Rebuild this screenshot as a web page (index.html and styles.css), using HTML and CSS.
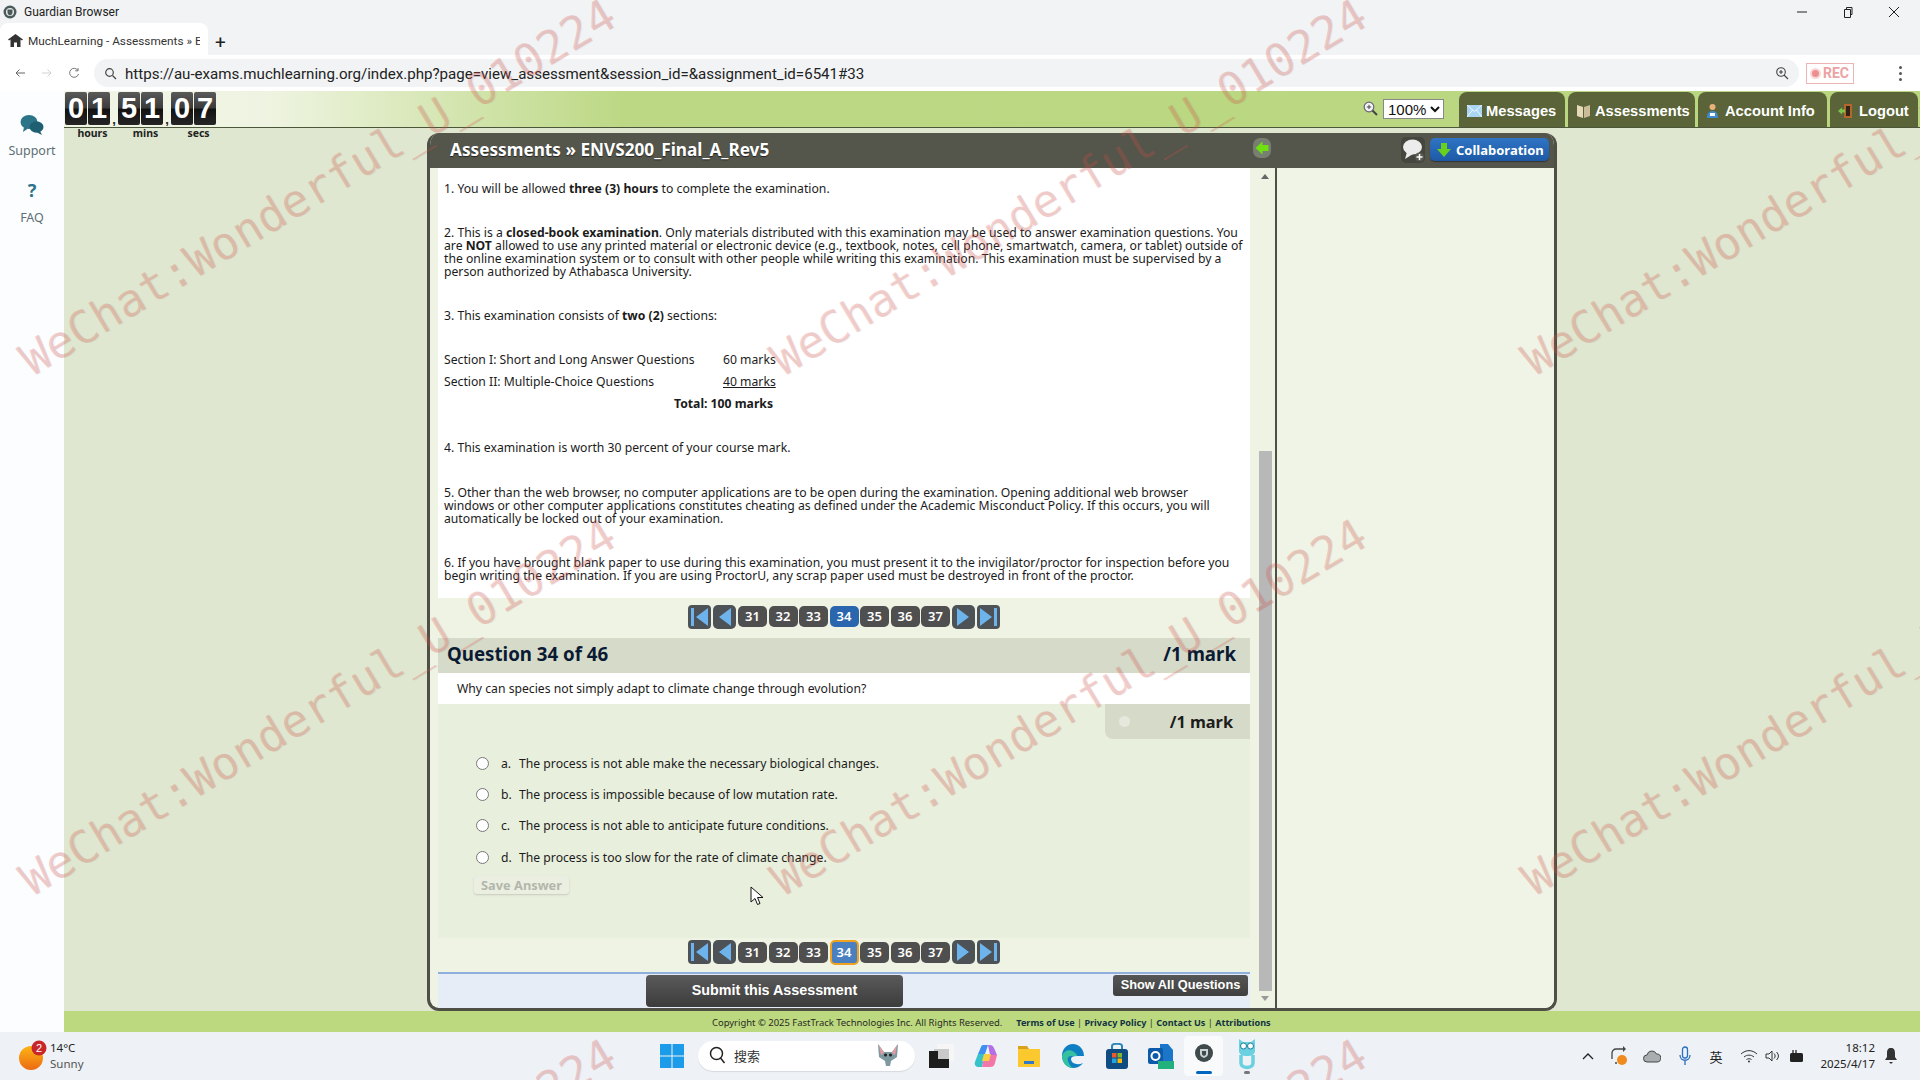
FILE: index.html
```html
<!DOCTYPE html>
<html>
	<head>
		<meta charset="utf-8">
		<title>MuchLearning - Assessments</title>
		<link rel="stylesheet" href="styles.css">
	</head>
	<body>
		<div class="titlebar">
			<svg class="ico-guard" width="14" height="14" viewBox="0 0 14 14"><circle cx="7" cy="7" r="6.5" fill="#4c5a5c"/><circle cx="7" cy="7" r="4" fill="#e8ecec"/><path d="M4.5 4.5h5v3c0 1.500-1.200 2.500-2.500 3-1.300-.5-2.500-1.500-2.500-3z" fill="#4c5a5c"/></svg>
			<span class="app-name">Guardian Browser</span>
			<div class="winbtns">
				<svg width="12" height="12" viewBox="0 0 12 12"><path d="M1 6h10" stroke="#222" fill="none"/></svg>
				<svg width="12" height="12" viewBox="0 0 12 12"><path d="M2.500 3.500h6v8h-6zM4.500 3.500V1.500h5.500v7H8.500" stroke="#222" fill="none"/></svg>
				<svg width="12" height="12" viewBox="0 0 12 12"><path d="M1 1l10 10M11 1L1 11" stroke="#222" fill="none"/></svg>
			</div>
		</div>
		<div class="tabstrip">
			<div class="tab">
				<svg width="15" height="15" viewBox="0 0 15 15"><path d="M7.500 1L0 6.500l1 1 1.500-1V14h3.500V9.500h3V14h3.500V6.500l1.500 1 1-1z" fill="#333"/></svg>
				<span class="tab-text">MuchLearning - Assessments » E</span>
			</div>
			<span class="newtab">+</span>
		</div>
		<div class="toolbar">
			<svg class="nav-ico" width="14" height="14" viewBox="0 0 14 14"><path d="M12 7H3M6.500 3.500L3 7l3.500 3.500" stroke="#666" fill="none"/></svg>
			<svg class="nav-ico" width="14" height="14" viewBox="0 0 14 14"><path d="M2 7h9M7.500 3.500L11 7l-3.500 3.500" stroke="#cfd2d4" fill="none"/></svg>
			<svg class="nav-ico" width="14" height="14" viewBox="0 0 14 14"><path d="M11 4.500A4.500 4.500 0 1 0 11.500 8M11 2v2.800H8.200" stroke="#777" fill="none"/></svg>
			<div class="urlbar">
				<svg width="13" height="13" viewBox="0 0 13 13"><circle cx="5.500" cy="5.500" r="3.800" stroke="#444" stroke-width="1.200" fill="none"/><path d="M8.500 8.500L12 12" stroke="#444" stroke-width="1.200"/></svg>
				<span class="url">https://au-exams.muchlearning.org/index.php?page=view_assessment&amp;session_id=&amp;assignment_id=6541#33</span>
				<svg class="url-zoom" width="14" height="14" viewBox="0 0 14 14"><circle cx="6" cy="6" r="4.300" stroke="#444" stroke-width="1.100" fill="none"/><path d="M9 9l4 4M4 6h4M6 4v4" stroke="#444" stroke-width="1.100"/></svg>
			</div>
			<div class="rec"><i class="rec-dot"></i>REC</div>
			<div class="dots"><i></i><i></i><i></i></div>
		</div>

		<div class="page">
			<div class="sidebar">
				<svg width="24" height="22" viewBox="0 0 24 22"><ellipse cx="9" cy="8" rx="8.500" ry="7" fill="#2c7488"/><path d="M4 13l-1 5 5-3.500z" fill="#2c7488"/><ellipse cx="16.500" cy="13" rx="7" ry="5.800" fill="#1f5f72"/><path d="M20 17l2 4-5-2.500z" fill="#1f5f72"/></svg>
				<span class="side-label">Support</span>
				<span class="side-q">?</span>
				<span class="side-label">FAQ</span>
			</div>
			<div class="main">
				<div class="header">
					<div class="timer">
						<div class="timer-group">
							<div class="digits"><b>0</b><b>1</b></div>
							<span>hours</span>
						</div>
						<i class="comma">,</i>
						<div class="timer-group">
							<div class="digits"><b>5</b><b>1</b></div>
							<span>mins</span>
						</div>
						<i class="comma">,</i>
						<div class="timer-group">
							<div class="digits"><b>0</b><b>7</b></div>
							<span>secs</span>
						</div>
					</div>
					<svg class="mag" width="15" height="15" viewBox="0 0 15 15"><circle cx="6" cy="6" r="4.800" fill="#f4f4f4" stroke="#667" stroke-width="1.200"/><path d="M9.500 9.500L14 14" stroke="#444" stroke-width="2"/><path d="M3.800 6h4.400M6 3.800v4.400" stroke="#445"/></svg>
					<select class="zoomsel"><option>100%</option></select>
					<div class="navtabs">
						<a class="navtab t-msg">
							<svg width="15" height="12" viewBox="0 0 15 12"><rect width="15" height="12" fill="#a9d4f2"/><path d="M0 0l7.500 6.500L15 0M0 12l5.500-7M15 12L9.500 5" stroke="#eef7fd" fill="none"/></svg>
							Messages</a>
						<a class="navtab t-ass">
							<svg width="15" height="14" viewBox="0 0 15 14"><path d="M1 1l6 2v11l-6-2z" fill="#e6d9ba"/><path d="M14 1L8 3v11l6-2z" fill="#c9bc98"/></svg>
							Assessments</a>
						<a class="navtab t-acc">
							<svg width="13" height="16" viewBox="0 0 13 16"><circle cx="6.500" cy="4" r="3" fill="#e9b27c"/><path d="M1 15c0-5 2-7 5.500-7s5.500 2 5.500 7z" fill="#3f8ccc"/><rect x="4" y="10" width="5" height="3" fill="#fff"/></svg>
							Account Info</a>
						<a class="navtab t-out">
							<svg width="15" height="16" viewBox="0 0 15 16"><rect x="6" y="1" width="8" height="14" fill="#b5662d"/><rect x="8" y="3" width="4" height="10" fill="#2f2418"/><path d="M0 8l4-3.500v2h3v3H4v2z" fill="#7cc44a"/></svg>
							Logout</a>
					</div>
				</div>

				<div class="content">
					<div class="panel">
						<div class="panel-head">
							<h1>Assessments » ENVS200_Final_A_Rev5</h1>
							<svg class="back-ico" width="18" height="20" viewBox="0 0 18 20"><rect width="18" height="20" rx="7" fill="#777f70"/><path d="M2.500 10l7-6.500V7h6v6h-6v3.500z" fill="#6fe010"/></svg>
							<svg class="bubble-ico" width="24" height="26" viewBox="0 0 24 26"><rect width="24" height="26" rx="5" fill="#45463d"/><ellipse cx="11.500" cy="10" rx="9.500" ry="7.500" fill="#ececec"/><path d="M6 15l-2 7 8-5z" fill="#ececec"/><circle cx="18.500" cy="20" r="4.500" fill="#5a5b52"/><path d="M18.500 17v6M15.500 20h6" stroke="#fff" stroke-width="1.500"/></svg>
							<a class="collab">
								<svg width="16" height="16" viewBox="0 0 16 16"><path d="M5 1h6v6h4l-7 8-7-8h4z" fill="#6ad01e"/></svg>
								Collaboration</a>
						</div>
						<div class="panel-body">
							<div class="qcol">
								<div class="notice">
									<p>1. You will be allowed <b>three (3) hours</b> to complete the examination.</p>
									<p>2. This is a <b>closed-book examination</b>. Only materials distributed with this examination may be used to answer examination questions. You<br>are <b>NOT</b> allowed to use any printed material or electronic device (e.g., textbook, notes, cell phone, smartwatch, camera, or tablet) outside of<br>the online examination system or to consult with other people while writing this examination. This examination must be supervised by a<br>person authorized by Athabasca University.</p>
									<p class="before-table">3. This examination consists of <b>two (2)</b> sections:</p>
									<div class="marks">
										<span>Section I: Short and Long Answer Questions</span><span>60 marks</span>
										<span>Section II: Multiple-Choice Questions</span><span class="under">40 marks</span>
										<b class="total">Total: 100 marks</b>
									</div>
									<p class="before-five">4. This examination is worth 30 percent of your course mark.</p>
									<p>5. Other than the web browser, no computer applications are to be open during the examination. Opening additional web browser<br>windows or other computer applications constitutes cheating as defined under the Academic Misconduct Policy. If this occurs, you will<br>automatically be locked out of your examination.</p>
									<p class="last">6. If you have brought blank paper to use during this examination, you must present it to the invigilator/proctor for inspection before you<br>begin writing the examination. If you are using ProctorU, any scrap paper used must be destroyed in front of the proctor.</p>
								</div>

								<div class="pager pager-top">
									<svg class="arrow" width="23" height="24" viewBox="0 0 23 24"><rect width="23" height="24" rx="4" fill="#4d5257"/><path d="M3 3h3v18H3zM20 3v18L8 12z" fill="#6db4ec"/></svg>
									<svg class="arrow" width="23" height="24" viewBox="0 0 23 24"><rect width="23" height="24" rx="5" fill="#4d5257"/><path d="M18 3v18L6 12z" fill="#6db4ec"/></svg>
									<span class="num">31</span><span class="num">32</span><span class="num">33</span><span class="num cur">34</span><span class="num">35</span><span class="num">36</span><span class="num">37</span>
									<svg class="arrow" width="23" height="24" viewBox="0 0 23 24"><rect width="23" height="24" rx="5" fill="#4d5257"/><path d="M5 3v18l12-9z" fill="#6db4ec"/></svg>
									<svg class="arrow" width="23" height="24" viewBox="0 0 23 24"><rect width="23" height="24" rx="4" fill="#4d5257"/><path d="M3 3v18l12-9zM17 3h3v18h-3z" fill="#6db4ec"/></svg>
								</div>

								<div class="q-head">
									<span>Question 34 of 46</span>
									<span>/1 mark</span>
								</div>
								<div class="q-text">Why can species not simply adapt to climate change through evolution?</div>
								<div class="answers">
									<div class="mark-tab">
										<i class="mark-dot"></i>
										<span>/1 mark</span>
									</div>
									<label class="opt"><input type="radio" name="a"><em>a.</em>The process is not able make the necessary biological changes.</label>
									<label class="opt"><input type="radio" name="a"><em>b.</em>The process is impossible because of low mutation rate.</label>
									<label class="opt"><input type="radio" name="a"><em>c.</em>The process is not able to anticipate future conditions.</label>
									<label class="opt"><input type="radio" name="a"><em>d.</em>The process is too slow for the rate of climate change.</label>
									<button class="save">Save Answer</button>
								</div>

								<div class="pager pager-bottom">
									<svg class="arrow" width="23" height="24" viewBox="0 0 23 24"><rect width="23" height="24" rx="4" fill="#4d5257"/><path d="M3 3h3v18H3zM20 3v18L8 12z" fill="#6db4ec"/></svg>
									<svg class="arrow" width="23" height="24" viewBox="0 0 23 24"><rect width="23" height="24" rx="5" fill="#4d5257"/><path d="M18 3v18L6 12z" fill="#6db4ec"/></svg>
									<span class="num">31</span><span class="num">32</span><span class="num">33</span><span class="num cur focus">34</span><span class="num">35</span><span class="num">36</span><span class="num">37</span>
									<svg class="arrow" width="23" height="24" viewBox="0 0 23 24"><rect width="23" height="24" rx="5" fill="#4d5257"/><path d="M5 3v18l12-9z" fill="#6db4ec"/></svg>
									<svg class="arrow" width="23" height="24" viewBox="0 0 23 24"><rect width="23" height="24" rx="4" fill="#4d5257"/><path d="M3 3v18l12-9zM17 3h3v18h-3z" fill="#6db4ec"/></svg>
								</div>

								<div class="submit-bar">
									<a class="submit">Submit this Assessment</a>
									<a class="showall">Show All Questions</a>
								</div>
							</div>
							<div class="scrollbar">
								<i class="sb-up"></i>
								<i class="sb-thumb"></i>
								<i class="sb-down"></i>
							</div>
							<div class="rightcol"></div>
						</div>
					</div>
				</div>

				<div class="footer">
					<span class="copy">Copyright © 2025 FastTrack Technologies Inc. All Rights Reserved.</span>
					<span class="links"><b>Terms of Use</b> | <b>Privacy Policy</b> | <b>Contact Us</b> | <b>Attributions</b></span>
				</div>
			</div>
		</div>

		<div class="taskbar">
			<div class="weather">
				<svg width="30" height="32" viewBox="0 0 30 32"><defs><linearGradient id="sun" x1="0" y1="0" x2="0" y2="1"><stop offset="0" stop-color="#fdb515"/><stop offset="1" stop-color="#ec6a12"/></linearGradient></defs><circle cx="12" cy="18" r="12" fill="url(#sun)"/><circle cx="20" cy="8" r="7.500" fill="#c8262a"/><text x="20" y="12" font-size="11" font-family="Liberation Sans" fill="#fff" text-anchor="middle">2</text></svg>
				<div class="w-text"><span>14°C</span><span class="w-sub">Sunny</span></div>
			</div>
			<div class="task-center">
				<svg class="winlogo" width="24" height="24" viewBox="0 0 24 24"><path d="M0 0h11.500v11.500H0zM12.500 0H24v11.500H12.500zM0 12.500h11.500V24H0zM12.500 12.500H24V24H12.500z" fill="#1c9ce8"/></svg>
				<div class="search">
					<svg width="18" height="18" viewBox="0 0 18 18"><circle cx="7.500" cy="7.500" r="6" stroke="#222" stroke-width="1.500" fill="none"/><path d="M11.500 12l4 5" stroke="#222" stroke-width="1.500"/></svg>
					<span>搜索</span>
					<svg class="bat" width="22" height="24" viewBox="0 0 22 24"><path d="M1 1l6 8h8l6-8-1 13-6 4-1 5h-4l-1-5-6-4z" fill="#7e9aa0"/><path d="M2 2l5 8-3 2zM20 2l-5 8 3 2z" fill="#e79aa3"/><circle cx="8.500" cy="12" r="1.500" fill="#222"/><circle cx="13.500" cy="12" r="1.500" fill="#222"/></svg>
				</div>
				<svg width="25" height="24" viewBox="0 0 25 24"><rect x="8" y="0" width="17" height="17" fill="#f6f6f6"/><rect x="5" y="5" width="15" height="12" fill="#c9c9c9"/><path d="M0 7h9v8h11v9H0z" fill="#1d1d1d"/></svg>
				<svg width="24" height="24" viewBox="0 0 24 24"><path d="M9 1h5l-3 9H4L7 3c.4-1.300 1-2 2-2z" fill="#3f8ff0"/><path d="M14 1h2c2 0 3 1 4 3l3 7h-7z" fill="#b46ee8"/><path d="M4 10h7l-3 13H5C2 23 0 21 1 18z" fill="#37c1c8"/><path d="M16 11h7l-2 8c-1 3-2 4-5 4H8l3-13z" fill="#f277a8"/><path d="M10 10h7l-2 7H8z" fill="#f8d040"/></svg>
				<svg width="24" height="24" viewBox="0 0 24 24"><path d="M1 2h9l2 3H1z" fill="#d9a21c"/><rect x="1" y="5" width="22" height="18" fill="#fbc92e"/><rect x="7" y="17" width="10" height="3" fill="#2f79c7"/></svg>
				<svg width="24" height="26" viewBox="0 0 24 26"><path d="M12 1C5 1 1 7 1 13s5 12 11 12c4 0 8-2 10-5-6 3-12 0-12-4 0-2 2-3 6-3h7C23 6 18 1 12 1z" fill="#0f7fc4"/><path d="M1 13C3 7 9 6 13 9c2 1 3 3 3 4h-6c-3 0-4 3-3 5 1 3 3 6 5 7C6 25 1 20 1 13z" fill="#35c1a0"/></svg>
				<svg width="24" height="26" viewBox="0 0 24 26"><path d="M7 6V3c0-3 10-3 10 0v3" stroke="#2a86b8" stroke-width="2" fill="none"/><rect x="1" y="6" width="22" height="20" rx="3" fill="#0f4c82"/><path d="M7 10h4.500v4.500H7z" fill="#ef5a2c"/><path d="M12.500 10H17v4.500h-4.500z" fill="#7fba2a"/><path d="M7 15.500h4.500V20H7z" fill="#1fa6e8"/><path d="M12.500 15.500H17V20h-4.500z" fill="#fdb900"/></svg>
				<svg width="26" height="26" viewBox="0 0 26 26"><path d="M12 1h8l5 6v12H12z" fill="#1b76c9"/><rect x="0" y="5" width="15" height="16" rx="2" fill="#0d5aa8"/><circle cx="7.500" cy="13" r="4" fill="none" stroke="#fff" stroke-width="2"/><rect x="10" y="18" width="16" height="8" fill="#22b07d"/></svg>
				<div class="task-active">
					<svg width="18" height="18" viewBox="0 0 18 18"><circle cx="9" cy="9" r="9" fill="#3f4a4c"/><path d="M5 5h8v5c0 2-2 3-4 4-2-1-4-2-4-4z" fill="#c9d2d2"/><path d="M7 7h4v3c0 1-1 1.500-2 2-1-.5-2-1-2-2z" fill="#3f4a4c"/></svg>
					<i class="active-bar"></i>
				</div>
				<svg class="owl" width="20" height="36" viewBox="0 0 20 36"><path d="M2 1l4 3h8l4-3v12c0 3-3 5-8 5s-8-2-8-5z" fill="#6bd0e0"/><circle cx="6.500" cy="8" r="3" fill="#fff" stroke="#1e7f9a"/><circle cx="13.500" cy="8" r="3" fill="#fff" stroke="#1e7f9a"/><path d="M4 17v8c0 6 12 6 12 0v-8" stroke="#6bd0e0" stroke-width="3.500" fill="none"/><rect x="7" y="33" width="6" height="3" rx="1.500" fill="#777"/></svg>
			</div>
			<div class="tray">
				<svg class="t-chev" width="12" height="8" viewBox="0 0 12 8"><path d="M1 7l5-5 5 5" stroke="#222" stroke-width="1.300" fill="none"/></svg>
				<svg class="t-sync" width="18" height="20" viewBox="0 0 18 20"><path d="M13 3H6a4 4 0 0 0-4 4v6M5 17h2" stroke="#444" stroke-width="1.300" fill="none"/><path d="M13 0v6l3-3z" fill="#444"/><circle cx="12" cy="14" r="5" fill="#f08a1c"/></svg>
				<svg class="t-cloud" width="18" height="14" viewBox="0 0 18 14"><path d="M4 13a3.500 3.500 0 0 1 0-7 5 5 0 0 1 9.500-1A4 4 0 0 1 14 13z" fill="#a9adb0" stroke="#444"/></svg>
				<svg class="t-mic" width="12" height="20" viewBox="0 0 12 20"><rect x="3.500" y="1" width="5" height="11" rx="2.500" fill="none" stroke="#2a6fc0" stroke-width="1.300"/><path d="M1 9c0 7 10 7 10 0M6 15v4" stroke="#2a6fc0" stroke-width="1.300" fill="none"/></svg>
				<span class="t-ime">英</span>
				<svg class="t-wifi" width="18" height="14" viewBox="0 0 18 14"><path d="M1 5c5-4.500 11-4.500 16 0M4 8c3-2.500 7-2.500 10 0M6.500 10.500c1.500-1 3.500-1 5 0" stroke="#333" fill="none"/><circle cx="9" cy="12.500" r="1" fill="#333"/></svg>
				<svg class="t-vol" width="16" height="14" viewBox="0 0 16 14"><path d="M1 5h3l3-3v10l-3-3H1zM9 4.500c1.500 1.500 1.500 3.500 0 5M11.500 3c2.500 2.500 2.500 5.500 0 8" stroke="#333" fill="none"/></svg>
				<svg class="t-bat" width="16" height="14" viewBox="0 0 16 14"><rect x="1" y="4" width="13" height="9" rx="1.500" fill="#222"/><path d="M4 1v4M7 1v4" stroke="#222" stroke-width="1.300"/></svg>
				<div class="clock"><span>18:12</span><span>2025/4/17</span></div>
				<svg class="t-bell" width="14" height="18" viewBox="0 0 14 18"><path d="M7 1c-3 0-4 2-4 5v4L1 13h12l-2-3V6c0-3-1-5-4-5zM5 15h4l-2 2z" fill="#333"/></svg>
			</div>
		</div>

		<svg class="cursor" width="14" height="20" viewBox="0 0 14 20"><path d="M1 1v15l4-3.500 2.500 6 2.500-1-2.500-6H13z" fill="#fff" stroke="#111"/></svg>

		<div class="watermark">
			<div class="wm-grid">
				<span>WeChat:Wonderful_U_010224</span><span>WeChat:Wonderful_U_010224</span><span>WeChat:Wonderful_U_010224</span>
				<span>WeChat:Wonderful_U_010224</span><span>WeChat:Wonderful_U_010224</span><span>WeChat:Wonderful_U_010224</span>
				<span>WeChat:Wonderful_U_010224</span><span>WeChat:Wonderful_U_010224</span><span>WeChat:Wonderful_U_010224</span>
			</div>
		</div>
	</body>
</html>
```
FILE: styles.css
```css
*{margin: 0;padding: 0;box-sizing: border-box;}
html,body{height: 1080px;overflow: hidden;}
body{position: relative;display: flex;flex-direction: column;font-family: "Noto Sans","Open Sans",sans-serif;font-size: 12.2px;color: #1b1b1b;background: #fff;}
a{text-decoration: none;}
svg{flex: none;display: block;}

/* browser chrome */
.titlebar{height: 23px;flex: none;display: flex;align-items: center;background: #f1f3f4;padding-left: 3px;}
.app-name{font-family: "Roboto",sans-serif;font-size: 12px;margin-left: 7px;color: #222;}
.winbtns{margin-left: auto;display: flex;gap: 34px;padding-right: 20px;}
.tabstrip{height: 32px;flex: none;display: flex;background: #f1f3f4;}
.tab{width: 208px;background: #fff;border-radius: 8px 8px 0 0;display: flex;align-items: center;gap: 5px;padding: 3px 8px 0;}
.tab-text{font-family: "Roboto",sans-serif;font-size: 11.800px;color: #333;white-space: nowrap;overflow: hidden;}
.newtab{font-family: "Roboto",sans-serif;font-size: 19px;margin: 8px 0 0 7px;color: #222;}
.toolbar{height: 36px;flex: none;display: flex;align-items: center;background: #fff;padding-left: 13px;}
.nav-ico{margin-right: 13px;}
.nav-ico:nth-child(3){margin-right: 13px;}
.urlbar{width: 1705px;height: 28px;background: #f1f3f4;border-radius: 14px;display: flex;align-items: center;padding: 0 10px;}
.url{font-family: "Roboto",sans-serif;font-size: 15.100px;color: #222;margin-left: 8px;padding-top: 1px;}
.url-zoom{margin-left: auto;}
.rec{width: 48px;height: 21px;margin-left: 7px;border: 1px solid #eeb4b4;color: #eca3a3;font: bold 14px "Roboto",sans-serif;display: flex;align-items: center;gap: 2px;padding-left: 3px;}
.rec-dot{width: 11px;height: 11px;border-radius: 50%;background: #ee8f8f;border: 2px solid #f8d8d8;}
.dots{margin-left: 45px;display: flex;flex-direction: column;gap: 3px;}
.dots i{width: 3px;height: 3px;border-radius: 50%;background: #555;}

/* page */
.page{flex: 1;display: flex;min-height: 0;}
.sidebar{width: 64px;flex: none;display: flex;flex-direction: column;align-items: center;background: #fbfdff;padding-top: 23px;}
.side-label{font-size: 12.500px;color: #5f6f73;margin-top: 6px;}
.side-q{font: bold 18px "Noto Sans",sans-serif;color: #2c7488;margin-top: 19px;}
.side-q + .side-label{margin-top: 7px;}
.main{flex: 1;display: flex;flex-direction: column;min-width: 0;background: #dfe7d0;}

.header{height: 37px;flex: none;display: flex;align-items: flex-start;background: linear-gradient(90deg,#f1f5e6 0,#eff4e2 200px,#bcd884 560px,#b9d67f 100%);border-bottom: 1px solid #4c5638;}
.timer{display: flex;margin-right: auto;align-items: flex-start;padding-left: 1px;}
.timer-group{display: flex;flex-direction: column;align-items: center;}
.digits{display: flex;gap: 1px;margin-top: 1px;}
.digits b{width: 22px;height: 33px;border-radius: 2px;background: linear-gradient(#5a5a5a 0,#3c3c3c 48%,#121212 52%,#262626 100%);color: #fff;font: bold 29px/33px "Liberation Sans",sans-serif;text-align: center;}
.timer-group span{font: bold 10.500px/14px "Noto Sans",sans-serif;color: #222;margin: 1px 0 0 10px;}
.comma{width: 8px;font: bold 13px/14px "Liberation Sans",sans-serif;color: #222;margin-top: 22px;text-align: center;}
.mag{margin: 10px 5px 0 0;}
.zoomsel{width: 61px;height: 20px;margin-top: 8px;font: 15px "Liberation Sans",sans-serif;border: 1px solid #888;background: #fff;color: #111;}
.navtabs{display: flex;gap: 3px;margin: 1px 2px 0 15px;}
.navtab{height: 35px;padding: 2px 0 0 8px;display: flex;align-items: center;gap: 4px;background: #5a6438;border-radius: 8px 8px 0 0;color: #fff;font: bold 14.700px "Liberation Sans",sans-serif;white-space: nowrap;}
.t-msg{width: 106px;}
.t-ass{width: 127px;}
.t-acc{width: 129px;gap: 6px;}
.t-out{width: 88px;gap: 6px;}

.content{flex: 1;min-height: 0;padding-top: 5px;}
.panel{width: 1130px;height: 878px;margin: 0 auto;display: flex;flex-direction: column;border: 3px solid #4e4f45;border-top: 0;border-radius: 12px;background: #eff3e4;overflow: hidden;}
.panel-head{height: 35px;flex: none;display: flex;align-items: center;background: #54554b;margin: 0 -3px;padding: 0 6px 2px 23px;}
.panel-head h1{font: bold 17.200px "Noto Sans",sans-serif;color: #fff;text-shadow: 0 1px 1px #222;margin-right: auto;}
.back-ico{margin-right: 130px;margin-top: -4px;}
.bubble-ico{margin-right: 5px;}
.collab{width: 119px;height: 23px;margin-right: 2px;background: linear-gradient(#2f74c4,#1d5aa6);border-radius: 5px;box-shadow: 0 1px 1px #333;display: flex;align-items: center;gap: 4px;padding-left: 6px;color: #fff;font: bold 13px "Noto Sans",sans-serif;}
.panel-body{flex: 1;display: flex;min-height: 0;}

.qcol{width: 820px;flex: none;padding-left: 8px;display: flex;flex-direction: column;}
.notice{height: 430px;flex: none;background: #fff;padding: 14px 0 0 6px;line-height: 13px;white-space: nowrap;}
.notice p{margin-bottom: 31px;}
.notice p.before-table{margin-bottom: 26.500px;}
.notice p.before-five{margin-bottom: 32px;}
.notice p.last{margin-bottom: 0;}
.marks{display: grid;grid-template-columns: 279px 54px;grid-auto-rows: 22px;align-items: center;margin-bottom: 26px;}
.under{text-decoration: underline;}
.total{grid-column: 1 / 3;justify-self: end;padding-right: 4px;}

.pager{display: flex;align-items: center;justify-content: center;}
.pager-top{height: 40px;padding-bottom: 3px;}
.pager-bottom{height: 34px;padding-bottom: 6px;}
.arrow{margin: 0 1px;}
.num{width: 29px;height: 21px;margin: 0 .75px;border-radius: 5px;background: #4f4f4f;color: #fff;font: 600 13px/21px "Noto Sans",sans-serif;text-align: center;}
.cur{background: #2966ad;}
.focus{height: 25px;line-height: 21px;background: #4a7fc0;border: 2px solid #f0a11e;}

.q-head{height: 35px;flex: none;display: flex;align-items: center;justify-content: space-between;background: #d6dbc9;padding: 0 14px 4px 9px;font: bold 18.700px "Noto Sans",sans-serif;color: #0b1a33;}
.q-text{height: 31px;flex: none;display: flex;align-items: center;background: #fff;padding-left: 19px;}
.answers{height: 234px;flex: none;display: flex;flex-direction: column;background: #e9efdd;}
.mark-tab{width: 145px;height: 35px;flex: none;align-self: flex-end;display: flex;align-items: center;justify-content: space-between;padding: 0 17px 0 14px;background: #d6dbc9;border-radius: 0 0 0 8px;font: bold 16.300px "Noto Sans",sans-serif;color: #1c1c1c;margin-bottom: 8.500px;}
.mark-dot{width: 11px;height: 11px;border-radius: 50%;background: #e6e8de;}
.opt{height: 31.300px;display: flex;align-items: center;padding-left: 38px;}
.opt input{width: 13px;height: 13px;margin: 0 12px 0 0;}
.opt em{width: 18px;font-style: normal;}
.save{width: 95px;height: 18px;margin: 3.500px 0 0 36px;border: 0;border-radius: 3px;background: #ebefe2;box-shadow: 0 1px 2px #c5c9bb;color: #b3b7ab;font: bold 12.800px "Noto Sans",sans-serif;}

.submit-bar{flex: 1;display: flex;align-items: flex-start;border-top: 2px solid #8fb0dc;background: #e6edf6;padding-top: 1px;}
.submit{width: 257px;height: 32px;margin-left: 208px;border-radius: 4px;background: linear-gradient(#5a5a5a,#3c3c3c);color: #fff;font: bold 14.300px/30px "Liberation Sans",sans-serif;text-align: center;}
.showall{width: 135px;height: 21px;margin-left: auto;margin-right: 2px;border-radius: 3px;background: linear-gradient(#565656,#3f3f3f);color: #fff;font: bold 12.800px/19px "Liberation Sans",sans-serif;text-align: center;}

.scrollbar{width: 25px;flex: none;display: flex;flex-direction: column;align-items: center;padding-left: 5px;background: #eff3e4;}
.sb-up{margin-top: 6px;border: 4px solid transparent;border-top: 0;border-bottom: 5px solid #666;}
.sb-thumb{width: 13px;height: 540px;margin-top: 272px;background: #b8b8b8;}
.sb-down{margin-top: 5px;border: 4px solid transparent;border-bottom: 0;border-top: 5px solid #999;}
.rightcol{flex: 1;border-left: 2px solid #4e4f45;background: #f0f4e6;}

.footer{height: 21px;flex: none;display: flex;align-items: center;background: #bcd980;padding: 2px 0 0 648px;white-space: nowrap;color: #2a2a22;}
.copy{font-size: 9.450px;}
.links{margin-left: 14px;font-size: 9.100px;color: #2a3a2a;}
.links b{color: #123341;}

/* taskbar */
.taskbar{height: 48px;flex: none;display: flex;align-items: center;background: #eef2f6;}
.weather{width: 660px;flex: none;display: flex;align-items: center;gap: 1px;padding-left: 19px;}
.w-text{display: flex;flex-direction: column;font: 11.500px/16px "Noto Sans",sans-serif;color: #222;}
.w-sub{color: #555;}
.task-center{display: flex;align-items: center;}
.winlogo{margin-right: 14px;}
.search{width: 217px;height: 30px;background: #fff;border-radius: 15px;display: flex;align-items: center;gap: 7px;padding: 0 16px 2px 11px;font: 13px "Noto Sans CJK SC",sans-serif;color: #333;box-shadow: 0 1px 1px #d5d9dd;margin-right: 14px;}
.bat{margin-left: auto;}
.task-center > svg{margin-right: 19.700px;}
.task-center > .winlogo{margin-right: 14px;}
.task-active{width: 39px;height: 40px;margin: 0 14px 0 -10px;background: #f8fafc;border-radius: 4px;display: flex;flex-direction: column;align-items: center;justify-content: flex-end;gap: 9px;padding-bottom: 2px;}
.active-bar{width: 16px;height: 3px;border-radius: 2px;background: #0067c0;}
.tray{margin-left: auto;display: flex;align-items: center;padding-right: 22px;}
.t-chev{margin-right: 16px;}
.t-sync{margin-right: 15px;}
.t-cloud{margin-right: 18px;}
.t-mic{margin-right: 18px;}
.t-ime{font: 13px "Noto Sans CJK SC",sans-serif;margin-right: 18px;color: #222;}
.t-wifi{margin-right: 7px;}
.t-vol{margin-right: 8px;}
.t-bat{margin-right: 15px;}
.clock{display: flex;flex-direction: column;align-items: flex-end;font: 11.500px/16px "Noto Sans",sans-serif;color: #222;margin-right: 9px;}

/* things lying over the page */
.cursor{position: absolute;left: 750px;top: 886px;}
.watermark{position: absolute;left: 0;top: 0;width: 1920px;height: 1080px;overflow: hidden;pointer-events: none;}
.wm-grid{margin: -137px 0 0 36px;display: grid;grid-template-columns: repeat(3,751px);grid-auto-rows: 520px;}
.wm-grid span{align-self: end;justify-self: start;transform-origin: 0 100%;transform: rotate(-31deg);font: 45.500px/1 "DejaVu Sans Mono",monospace;color: rgba(222,80,70,.27);text-shadow: 1px 1px 0 rgba(90,90,90,.07);white-space: nowrap;}
```
